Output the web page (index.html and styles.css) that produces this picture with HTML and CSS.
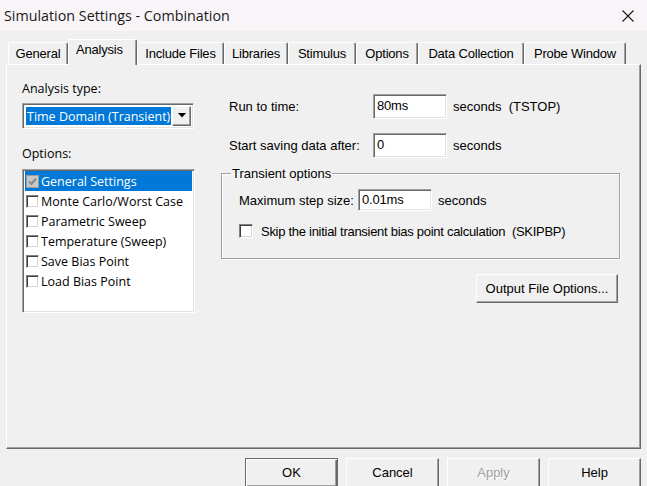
FILE: index.html
```html
<!DOCTYPE html>
<html>
<head>
<meta charset="utf-8">
<title>Simulation Settings - Combination</title>
<link rel="stylesheet" href="styles.css">
</head>
<body>
<div class="window">
  <div class="titlebar">
    <span class="title">Simulation Settings - Combination</span>
    <svg class="close" width="12" height="12" viewBox="0 0 12 12"><path d="M0.5 0.5 L11.5 11.5 M11.5 0.5 L0.5 11.5" stroke="#1a1a1a" stroke-width="1.1" fill="none"/></svg>
  </div>
  <div class="tabs">
    <div class="tab t-general">General</div>
    <div class="tab t-analysis selected">Analysis</div>
    <div class="tab t-include">Include Files</div>
    <div class="tab t-libraries">Libraries</div>
    <div class="tab t-stimulus">Stimulus</div>
    <div class="tab t-options">Options</div>
    <div class="tab t-data">Data Collection</div>
    <div class="tab t-probe">Probe Window</div>
  </div>
  <div class="panel">
    <div class="left">
      <div class="seg-label">Analysis type:</div>
      <div class="combo">
        <div class="combo-field"><span class="combo-sel">Time Domain (Transient)</span></div>
        <div class="combo-btn"><svg width="8" height="5" viewBox="0 0 8 5"><path d="M0 0 H8 L4 4.5 Z" fill="#000"/></svg></div>
      </div>
      <div class="seg-label options-label">Options:</div>
      <div class="listbox">
        <div class="item selected"><span class="cb checked"><svg width="11" height="11" viewBox="0 0 11 11"><path d="M2 5.5 L4.5 8 L9 2.5" stroke="#8a8a8a" stroke-width="2" fill="none"/></svg></span><span>General Settings</span></div>
        <div class="item"><span class="cb"></span><span>Monte Carlo/Worst Case</span></div>
        <div class="item"><span class="cb"></span><span>Parametric Sweep</span></div>
        <div class="item"><span class="cb"></span><span>Temperature (Sweep)</span></div>
        <div class="item"><span class="cb"></span><span>Save Bias Point</span></div>
        <div class="item"><span class="cb"></span><span>Load Bias Point</span></div>
      </div>
    </div>
    <div class="right">
      <div class="row">
        <span class="lbl">Run to time:</span>
        <span class="edit">80ms</span>
        <span class="unit">seconds&nbsp; (TSTOP)</span>
      </div>
      <div class="row row2">
        <span class="lbl">Start saving data after:</span>
        <span class="edit">0</span>
        <span class="unit">seconds</span>
      </div>
      <fieldset class="group">
        <legend>Transient options</legend>
        <div class="grow">
          <span class="glbl">Maximum step size:</span>
          <span class="edit small">0.01ms</span>
          <span class="unit">seconds</span>
        </div>
        <div class="gcheck">
          <span class="cb big"></span>
          <span class="skip">Skip the initial transient bias point calculation&nbsp; (SKIPBP)</span>
        </div>
      </fieldset>
      <div class="btn output">Output File Options...</div>
    </div>
  </div>
  <div class="buttons">
    <div class="btn dlg default">OK</div>
    <div class="btn dlg">Cancel</div>
    <div class="btn dlg disabled">Apply</div>
    <div class="btn dlg">Help</div>
  </div>
</div>
</body>
</html>
```
FILE: styles.css
```css
html, body {
  margin: 0;
  padding: 0;
}
body {
  width: 647px;
  height: 486px;
  overflow: hidden;
  background: #f0f0f0;
  font-family: "Liberation Sans", Arial, sans-serif;
  font-size: 13px;
  color: #000;
}
.window {
  width: 647px;
  height: 486px;
  display: flex;
  flex-direction: column;
  background: #f0f0f0;
}
.titlebar {
  height: 31px;
  flex: none;
  background: #f8f4f8;
  display: flex;
  align-items: center;
  justify-content: space-between;
  padding: 0 13px 0 4px;
}
.title {
  font-family: "Open Sans", "Noto Sans", sans-serif;
  font-size: 14.3px;
  color: #1a1a1a;
}
.tabs {
  display: flex;
  align-items: flex-end;
  height: 22px;
  margin: 11px 0 0 8px;
  flex: none;
}
.tab {
  box-sizing: border-box;
  height: 22px;
  line-height: 21px;
  text-align: center;
  border-top: 1px solid #fff;
  border-left: 1px solid #fff;
  border-right: 1px solid #696969;
  box-shadow: inset -1px 0 0 #a0a0a0;
  border-radius: 2px 2px 0 0;
  white-space: nowrap;
  letter-spacing: -0.2px;
}
.t-general { width: 60px; }
.t-analysis { width: 69px; }
.t-include { width: 87px; }
.t-libraries { width: 64px; }
.t-stimulus { width: 68px; }
.t-options { width: 62px; }
.t-data { width: 106px; }
.t-probe { width: 102px; }
.tab.selected {
  height: 26px;
  margin-bottom: -1px;
  line-height: 20px;
  text-align: left;
  padding-left: 7px;
  background: #f0f0f0;
  position: relative;
  z-index: 1;
}
.panel {
  box-sizing: border-box;
  height: 385px;
  margin: 0 6px;
  flex: none;
  border-top: 1px solid #fff;
  border-left: 1px solid #fff;
  border-right: 1px solid #696969;
  border-bottom: 1px solid #696969;
  box-shadow: inset -1px -1px 0 #a0a0a0;
  display: flex;
  padding: 16px 0 0 15px;
  gap: 26px;
}
.left {
  width: 173px;
  flex: none;
  display: flex;
  flex-direction: column;
}
.seg-label {
  font-family: "Open Sans", "Noto Sans", sans-serif;
  font-size: 12.5px;
  line-height: 15px;
  color: #000;
}
.combo {
  box-sizing: border-box;
  margin-top: 7px;
  height: 26px;
  width: 172px;
  border-top: 1px solid #a0a0a0;
  border-left: 1px solid #a0a0a0;
  border-right: 1px solid #fff;
  border-bottom: 1px solid #fff;
  box-shadow: inset 1px 1px 0 #696969, inset -1px -1px 0 #e3e3e3;
  background: #fff;
  display: flex;
  padding: 2px;
}
.combo-field {
  flex: 1;
  display: flex;
  padding: 1px;
}
.combo-sel {
  flex: 1;
  background: #0078d7;
  color: #fff;
  font-family: "Open Sans", "Noto Sans", sans-serif;
  font-size: 12.5px;
  line-height: 19px;
  padding-left: 1px;
  white-space: nowrap;
  overflow: hidden;
}
.combo-btn {
  box-sizing: border-box;
  width: 19px;
  background: #f0f0f0;
  border-top: 1px solid #fff;
  border-left: 1px solid #fff;
  border-right: 1px solid #696969;
  border-bottom: 1px solid #696969;
  box-shadow: inset -1px -1px 0 #a0a0a0;
  display: flex;
  align-items: center;
  justify-content: center;
  padding-bottom: 1px;
}
.options-label {
  margin-top: 17px;
}
.listbox {
  box-sizing: border-box;
  margin-top: 8px;
  width: 173px;
  height: 144px;
  background: #fff;
  border-top: 1px solid #a0a0a0;
  border-left: 1px solid #a0a0a0;
  border-right: 1px solid #fff;
  border-bottom: 1px solid #fff;
  box-shadow: inset 1px 1px 0 #696969, inset -1px -1px 0 #e3e3e3;
  padding: 1px 2px 2px 2px;
}
.item {
  height: 20px;
  display: flex;
  align-items: center;
  gap: 2px;
  padding-left: 1px;
  font-family: "Open Sans", "Noto Sans", sans-serif;
  font-size: 12.5px;
  white-space: nowrap;
}
.item.selected {
  background: #0078d7;
  color: #fff;
}
.cb {
  box-sizing: border-box;
  width: 13px;
  height: 13px;
  flex: none;
  background: #fff;
  border-top: 1px solid #808080;
  border-left: 1px solid #808080;
  border-right: 1px solid #fff;
  border-bottom: 1px solid #fff;
  box-shadow: inset 1px 1px 0 #404040, inset -1px -1px 0 #d4d4d4;
  display: flex;
  align-items: center;
  justify-content: center;
}
.cb.checked {
  background: #c8c8c8;
  border-color: #9a9a9a;
  box-shadow: none;
}
.cb.big {
  width: 14px;
  height: 14px;
}
.right {
  width: 399px;
  flex: none;
  display: flex;
  flex-direction: column;
  margin-top: 13px;
}
.row {
  display: flex;
  align-items: center;
  height: 25px;
  padding-left: 8px;
}
.row2 {
  margin-top: 14px;
}
.lbl {
  width: 144px;
  flex: none;
}
.edit {
  box-sizing: border-box;
  width: 74px;
  height: 25px;
  flex: none;
  background: #fff;
  border-top: 1px solid #a0a0a0;
  border-left: 1px solid #a0a0a0;
  border-right: 1px solid #fff;
  border-bottom: 1px solid #fff;
  box-shadow: inset 1px 1px 0 #696969, inset -1px -1px 0 #e3e3e3;
  padding: 0 3px;
  line-height: 22px;
  letter-spacing: -0.2px;
}
.edit.small {
  height: 22px;
  line-height: 19px;
}
.unit {
  margin-left: 6px;
  white-space: nowrap;
}
.group {
  margin: 8px 0 0 0;
  padding: 8px 10px 17px 17px;
  width: 399px;
  box-sizing: border-box;
  border: 1px solid #a0a0a0;
  box-shadow: 1px 1px 0 #fff, inset 1px 1px 0 #fff;
  min-width: 0;
}
.group legend {
  padding: 0 1px;
  margin-left: -8px;
  line-height: 15px;
}
.grow {
  display: flex;
  align-items: center;
  height: 22px;
}
.glbl {
  width: 119px;
  flex: none;
}
.gcheck {
  display: flex;
  align-items: center;
  gap: 8px;
  height: 20px;
  margin-top: 10px;
  white-space: nowrap;
}
.skip {
  letter-spacing: -0.28px;
}
.btn {
  box-sizing: border-box;
  background: #f0f0f0;
  border-top: 1px solid #fff;
  border-left: 1px solid #fff;
  border-right: 1px solid #696969;
  border-bottom: 1px solid #696969;
  box-shadow: inset -1px -1px 0 #a0a0a0;
  text-align: center;
  white-space: nowrap;
}
.output {
  align-self: flex-end;
  margin: 15px 2px 0 0;
  width: 142px;
  height: 29px;
  line-height: 27px;
}
.buttons {
  display: flex;
  justify-content: flex-end;
  gap: 8px;
  margin-top: 9px;
  padding-right: 6px;
  flex: none;
}
.dlg {
  width: 93px;
  height: 30px;
  line-height: 28px;
}
.dlg.default {
  border: 1px solid #696969;
  box-shadow: inset 1px 1px 0 #fff, inset -1px -1px 0 #696969, inset -2px -2px 0 #a0a0a0;
}
.dlg.disabled {
  color: #a0a0a0;
  text-shadow: 1px 1px 0 #fff;
}
```
